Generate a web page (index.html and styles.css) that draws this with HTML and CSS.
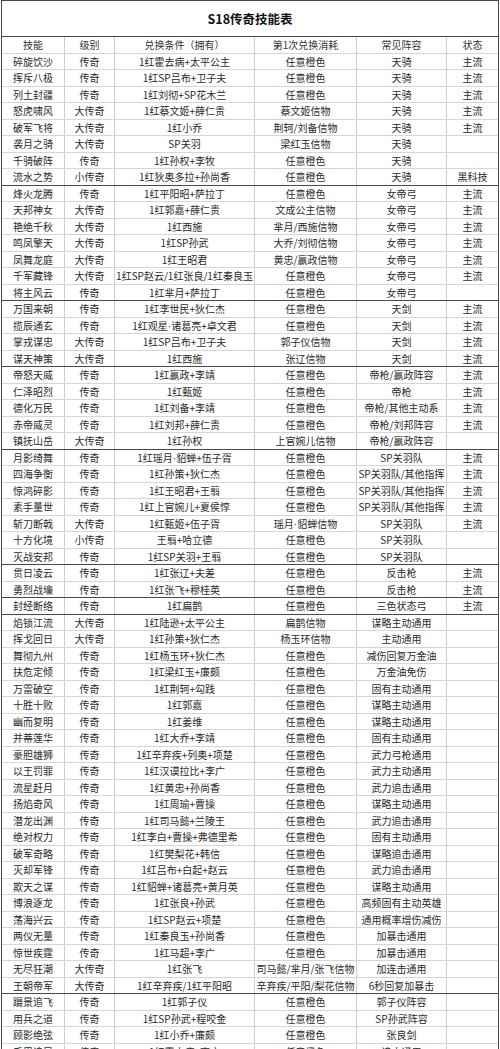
FILE: index.html
```html
<!DOCTYPE html>
<html lang="zh-CN">
<head>
<meta charset="utf-8">
<title>S18传奇技能表</title>
<link rel="stylesheet" href="styles.css">
</head>
<body>
<div class="sheet">
  <div class="title">S18传奇技能表</div>
  <div class="row head"><div>技能</div><div>级别</div><div>兑换条件（拥有）</div><div>第1次兑换消耗</div><div>常见阵容</div><div>状态</div></div>

  <div class="row"><div>碎旋饮沙</div><div>传奇</div><div>1红霍去病+太平公主</div><div>任意橙色</div><div>天骑</div><div>主流</div></div>
  <div class="row"><div>挥斥八极</div><div>传奇</div><div>1红SP吕布+卫子夫</div><div>任意橙色</div><div>天骑</div><div>主流</div></div>
  <div class="row"><div>列土封疆</div><div>传奇</div><div>1红刘彻+SP花木兰</div><div>任意橙色</div><div>天骑</div><div>主流</div></div>
  <div class="row"><div>怒虎啸风</div><div>大传奇</div><div>1红蔡文姬+薛仁贵</div><div>蔡文姬信物</div><div>天骑</div><div>主流</div></div>
  <div class="row"><div>破军飞将</div><div>大传奇</div><div>1红小乔</div><div>荆轲/刘备信物</div><div>天骑</div><div>主流</div></div>
  <div class="row"><div>袭月之骑</div><div>大传奇</div><div>SP关羽</div><div>梁红玉信物</div><div>天骑</div><div></div></div>
  <div class="row"><div>千骑破阵</div><div>传奇</div><div>1红孙权+李牧</div><div>任意橙色</div><div>天骑</div><div></div></div>
  <div class="row sep"><div>流水之势</div><div>小传奇</div><div>1红狄奥多拉+孙尚香</div><div>任意橙色</div><div>天骑</div><div>黑科技</div></div>

  <div class="row"><div>烽火龙腾</div><div>传奇</div><div>1红平阳昭+萨拉丁</div><div>任意橙色</div><div>女帝弓</div><div>主流</div></div>
  <div class="row"><div>天邦神女</div><div>大传奇</div><div>1红郭嘉+薛仁贵</div><div>文成公主信物</div><div>女帝弓</div><div>主流</div></div>
  <div class="row"><div>艳绝千秋</div><div>大传奇</div><div>1红西施</div><div>芈月/西施信物</div><div>女帝弓</div><div>主流</div></div>
  <div class="row"><div>鸣凤擎天</div><div>大传奇</div><div>1红SP孙武</div><div>大乔/刘彻信物</div><div>女帝弓</div><div>主流</div></div>
  <div class="row"><div>凤舞龙庭</div><div>大传奇</div><div>1红王昭君</div><div>黄忠/嬴政信物</div><div>女帝弓</div><div>主流</div></div>
  <div class="row"><div>千军藏锋</div><div>大传奇</div><div>1红SP赵云/1红张良/1红秦良玉</div><div>任意橙色</div><div>女帝弓</div><div>主流</div></div>
  <div class="row sep"><div>将主风云</div><div>传奇</div><div>1红芈月+萨拉丁</div><div>任意橙色</div><div>女帝弓</div><div></div></div>

  <div class="row"><div>万国来朝</div><div>传奇</div><div>1红李世民+狄仁杰</div><div>任意橙色</div><div>天剑</div><div>主流</div></div>
  <div class="row"><div>揽辰通玄</div><div>传奇</div><div>1红观星<span class="dot">·</span>诸葛亮+卓文君</div><div>任意橙色</div><div>天剑</div><div>主流</div></div>
  <div class="row"><div>掌戎谋忠</div><div>大传奇</div><div>1红SP吕布+卫子夫</div><div>郭子仪信物</div><div>天剑</div><div>主流</div></div>
  <div class="row sep"><div>谋天神策</div><div>大传奇</div><div>1红西施</div><div>张辽信物</div><div>天剑</div><div>主流</div></div>

  <div class="row"><div>帝怒天威</div><div>传奇</div><div>1红嬴政+李靖</div><div>任意橙色</div><div>帝枪/嬴政阵容</div><div>主流</div></div>
  <div class="row"><div>仁泽昭烈</div><div>传奇</div><div>1红甄姬</div><div>任意橙色</div><div>帝枪</div><div>主流</div></div>
  <div class="row"><div>德化万民</div><div>传奇</div><div>1红刘备+李靖</div><div>任意橙色</div><div>帝枪/其他主动系</div><div>主流</div></div>
  <div class="row"><div>赤帝威灵</div><div>传奇</div><div>1红刘邦+薛仁贵</div><div>任意橙色</div><div>帝枪/刘邦阵容</div><div>主流</div></div>
  <div class="row sep"><div>镇抚山岳</div><div>大传奇</div><div>1红孙权</div><div>上官婉儿信物</div><div>帝枪/嬴政阵容</div><div></div></div>

  <div class="row"><div>月影绮舞</div><div>传奇</div><div>1红瑶月<span class="dot">·</span>貂蝉+伍子胥</div><div>任意橙色</div><div>SP关羽队</div><div>主流</div></div>
  <div class="row"><div>四海争衡</div><div>传奇</div><div>1红孙策+狄仁杰</div><div>任意橙色</div><div>SP关羽队/其他指挥</div><div>主流</div></div>
  <div class="row"><div>惊鸿碎影</div><div>传奇</div><div>1红王昭君+王翦</div><div>任意橙色</div><div>SP关羽队/其他指挥</div><div>主流</div></div>
  <div class="row"><div>素手量世</div><div>传奇</div><div>1红上官婉儿+夏侯惇</div><div>任意橙色</div><div>SP关羽队/其他指挥</div><div>主流</div></div>
  <div class="row"><div>斩刀断戟</div><div>大传奇</div><div>1红甄姬+伍子胥</div><div>瑶月<span class="dot">·</span>貂蝉信物</div><div>SP关羽队</div><div>主流</div></div>
  <div class="row"><div>十方化境</div><div>小传奇</div><div>王翦+哈立德</div><div>任意橙色</div><div>SP关羽队</div><div></div></div>
  <div class="row sep"><div>灭战安邦</div><div>传奇</div><div>1红SP关羽+王翦</div><div>任意橙色</div><div>SP关羽队</div><div></div></div>

  <div class="row"><div>贯日凌云</div><div>传奇</div><div>1红张辽+夫差</div><div>任意橙色</div><div>反击枪</div><div>主流</div></div>
  <div class="row sep"><div>勇烈战壕</div><div>传奇</div><div>1红张飞+穆桂英</div><div>任意橙色</div><div>反击枪</div><div>主流</div></div>

  <div class="row sep"><div>封经断络</div><div>传奇</div><div>1红扁鹊</div><div>任意橙色</div><div>三色状态弓</div><div>主流</div></div>

  <div class="row"><div>焰锁江流</div><div>大传奇</div><div>1红陆逊+太平公主</div><div>扁鹊信物</div><div>谋略主动通用</div><div></div></div>
  <div class="row"><div>挥戈回日</div><div>大传奇</div><div>1红孙策+狄仁杰</div><div>杨玉环信物</div><div>主动通用</div><div></div></div>
  <div class="row"><div>舞彻九州</div><div>传奇</div><div>1红杨玉环+狄仁杰</div><div>任意橙色</div><div>减伤回复万金油</div><div></div></div>
  <div class="row"><div>扶危定倾</div><div>传奇</div><div>1红梁红玉+廉颇</div><div>任意橙色</div><div>万金油免伤</div><div></div></div>
  <div class="row"><div>万雷破空</div><div>传奇</div><div>1红荆轲+勾践</div><div>任意橙色</div><div>固有主动通用</div><div></div></div>
  <div class="row"><div>十胜十败</div><div>传奇</div><div>1红郭嘉</div><div>任意橙色</div><div>谋略主动通用</div><div></div></div>
  <div class="row"><div>幽而复明</div><div>传奇</div><div>1红姜维</div><div>任意橙色</div><div>谋略主动通用</div><div></div></div>
  <div class="row"><div>并蒂莲华</div><div>传奇</div><div>1红大乔+李靖</div><div>任意橙色</div><div>固有主动通用</div><div></div></div>
  <div class="row"><div>豪胆雄狮</div><div>传奇</div><div>1红辛弃疾+列奥+项楚</div><div>任意橙色</div><div>武力弓枪通用</div><div></div></div>
  <div class="row"><div>以王罚罪</div><div>传奇</div><div>1红汉谟拉比+李广</div><div>任意橙色</div><div>武力主动通用</div><div></div></div>
  <div class="row"><div>流星赶月</div><div>传奇</div><div>1红黄忠+孙尚香</div><div>任意橙色</div><div>武力追击通用</div><div></div></div>
  <div class="row"><div>扬焰奇风</div><div>传奇</div><div>1红周瑜+曹操</div><div>任意橙色</div><div>谋略主动通用</div><div></div></div>
  <div class="row"><div>潜龙出渊</div><div>传奇</div><div>1红司马懿+兰陵王</div><div>任意橙色</div><div>武力追击通用</div><div></div></div>
  <div class="row"><div>绝对权力</div><div>传奇</div><div>1红李白+曹操+弗德里希</div><div>任意橙色</div><div>固有主动通用</div><div></div></div>
  <div class="row"><div>破军奇略</div><div>传奇</div><div>1红樊梨花+韩信</div><div>任意橙色</div><div>谋略追击通用</div><div></div></div>
  <div class="row"><div>灭却军锋</div><div>传奇</div><div>1红吕布+白起+赵云</div><div>任意橙色</div><div>武力追击通用</div><div></div></div>
  <div class="row"><div>欺天之谋</div><div>传奇</div><div>1红貂蝉+诸葛亮+黄月英</div><div>任意橙色</div><div>谋略主动通用</div><div></div></div>
  <div class="row"><div>博浪逐龙</div><div>传奇</div><div>1红张良+孙武</div><div>任意橙色</div><div>高频固有主动英雄</div><div></div></div>
  <div class="row"><div>荡海兴云</div><div>传奇</div><div>1红SP赵云+项楚</div><div>任意橙色</div><div>通用概率增伤减伤</div><div></div></div>
  <div class="row"><div>两仪无量</div><div>传奇</div><div>1红秦良玉+孙尚香</div><div>任意橙色</div><div>加暴击通用</div><div></div></div>
  <div class="row"><div>惊世疾霆</div><div>传奇</div><div>1红马超+李广</div><div>任意橙色</div><div>加暴击通用</div><div></div></div>
  <div class="row"><div>无尽狂潮</div><div>大传奇</div><div>1红张飞</div><div>司马懿/芈月/张飞信物</div><div>加连击通用</div><div></div></div>
  <div class="row sep"><div>王朝帝军</div><div>大传奇</div><div>1红辛弃疾/1红平阳昭</div><div>辛弃疾/平阳/梨花信物</div><div>6秒回复加暴击</div><div></div></div>

  <div class="row"><div>蹑景追飞</div><div>传奇</div><div>1红郭子仪</div><div>任意橙色</div><div>郭子仪阵容</div><div></div></div>
  <div class="row"><div>用兵之道</div><div>传奇</div><div>1红SP孙武+程咬金</div><div>任意橙色</div><div>SP孙武阵容</div><div></div></div>
  <div class="row"><div>顾影绝弦</div><div>传奇</div><div>1红小乔+廉颇</div><div>任意橙色</div><div>张良剑</div><div></div></div>
  <div class="row"><div>千里追风</div><div>传奇</div><div>1红霍去病+李广</div><div>任意橙色</div><div>追击通用</div><div></div></div>
</div>
</body>
</html>
```

FILE: styles.css
```css
html, body {
  margin: 0;
  padding: 0;
  background: #ffffff;
}

body {
  font-family: "Noto Sans CJK SC", "Noto Sans", sans-serif;
  color: #2a2a2a;
  overflow: hidden;
}

.sheet {
  width: 498px;
  margin-left: 1px;
  border-left: 1px solid #4a4a4a;
  border-right: 1px solid #4a4a4a;
  border-top: 1px solid #4a4a4a;
  box-sizing: border-box;
}

.title {
  height: 36px;
  box-sizing: border-box;
  border-bottom: 1px solid #4a4a4a;
  display: flex;
  align-items: center;
  justify-content: center;
  font-size: 12.5px;
  font-weight: bold;
  color: #111111;
}

.row {
  display: grid;
  grid-template-columns: 63px 50px 140px 102px 90px 51px;
  height: 16.5px;
  box-sizing: border-box;
  border-bottom: 1px solid #d6d6d6;
  font-size: 10px;
  line-height: 15.5px;
}

.row > div {
  text-align: center;
  white-space: nowrap;
  overflow: hidden;
  border-right: 1px solid #cfcfcf;
  box-sizing: border-box;
}

.row > div:last-child {
  border-right: none;
}

.row.head {
  color: #333333;
}

.row.sep {
  border-bottom: 1px solid #4a4a4a;
}

.dot {
  font-family: "Liberation Sans", sans-serif;
}
```
